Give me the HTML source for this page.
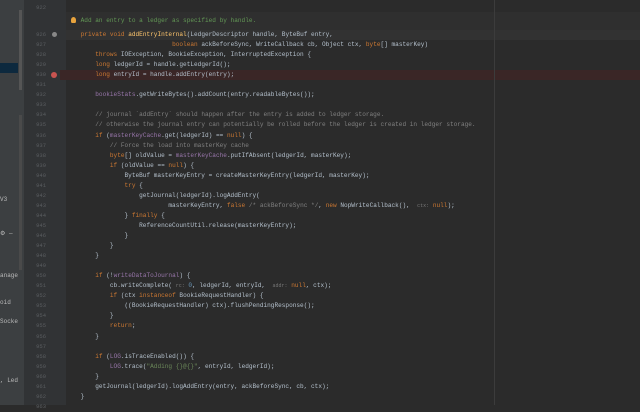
<!DOCTYPE html>
<html><head><style>
body{margin:0;width:640px;height:405px;overflow:hidden;background:#2b2b2b;font-family:"Liberation Mono",monospace;}
#left{position:absolute;left:0;top:0;width:24px;height:405px;background:#3c3f41;}
#gut{position:absolute;left:24px;top:0;width:42px;height:405px;background:#313335;}
.ln{position:absolute;left:24px;width:22px;text-align:right;font-size:5.5px;line-height:10px;color:#5a5d60;}
.c{position:absolute;left:66px;font-size:6.1px;line-height:10px;color:#b4c0cc;white-space:pre;}
.k{color:#cc7832}.cm{color:#808080}.d{color:#629755}.f{color:#9876aa}.s{color:#6a8759}.n{color:#6897bb}.h{color:#787878;font-size:5px}.m{color:#ffc66d}
.lt{position:absolute;left:0;font-size:6px;color:#bbbbbb;white-space:pre;}
</style></head><body>
<div id="left"></div>
<div style="position:absolute;left:0;top:63px;width:18px;height:10px;background:#0d293e"></div>
<div style="position:absolute;left:19px;top:10px;width:3px;height:80px;background:#555;"></div>
<div style="position:absolute;left:19px;top:115px;width:3px;height:155px;background:#4a4a4a;"></div>
<div class="lt" style="top:196px">V3</div>
<div class="lt" style="top:230px">⚙ —</div>
<div class="lt" style="top:272px">anage</div>
<div class="lt" style="top:299px">oid</div>
<div class="lt" style="top:318px">Socke</div>
<div class="lt" style="top:377px">, Led</div>
<div id="gut"></div>
<div style="position:absolute;left:66px;top:12px;width:574px;height:19px;background:#2f2f2f"></div>
<div style="position:absolute;left:66px;top:30px;width:574px;height:10px;background:#323232"></div>
<div style="position:absolute;left:60px;top:70px;width:580px;height:10px;background:#3a2626"></div>
<div style="position:absolute;left:494px;top:0;width:1px;height:405px;background:#3c3c3c"></div>
<div style="position:absolute;left:51px;top:72px;width:6px;height:6px;border-radius:50%;background:#c75450"></div>
<div style="position:absolute;left:52px;top:32px;width:5px;height:5px;border-radius:50%;background:#888"></div>
<div style="position:absolute;left:71px;top:17px;width:5px;height:6px;border-radius:50% 50% 30% 30%;background:#e8a33d"></div>
<div id="code"></div>
<script>
var L=[
[922,''],
[null,'    <span class="d">Add an entry to a ledger as specified by handle.</span>',21],
[926,'    <span class="k">private void </span><span class="m">addEntryInternal</span>(LedgerDescriptor handle, ByteBuf entry,'],
[927,'                             <span class="k">boolean</span> ackBeforeSync, WriteCallback cb, Object ctx, <span class="k">byte</span>[] masterKey)'],
[928,'        <span class="k">throws</span> IOException, BookieException, InterruptedException {'],
[929,'        <span class="k">long</span> ledgerId = handle.getLedgerId();'],
[930,'        <span class="k">long</span> entryId = handle.addEntry(entry);'],
[931,''],
[932,'        <span class="f">bookieStats</span>.getWriteBytes().addCount(entry.readableBytes());'],
[933,''],
[934,'        <span class="cm">// journal `addEntry` should happen after the entry is added to ledger storage.</span>'],
[935,'        <span class="cm">// otherwise the journal entry can potentially be rolled before the ledger is created in ledger storage.</span>'],
[936,'        <span class="k">if</span> (<span class="f">masterKeyCache</span>.get(ledgerId) == <span class="k">null</span>) {'],
[937,'            <span class="cm">// Force the load into masterKey cache</span>'],
[938,'            <span class="k">byte</span>[] oldValue = <span class="f">masterKeyCache</span>.putIfAbsent(ledgerId, masterKey);'],
[939,'            <span class="k">if</span> (oldValue == <span class="k">null</span>) {'],
[940,'                ByteBuf masterKeyEntry = createMasterKeyEntry(ledgerId, masterKey);'],
[941,'                <span class="k">try</span> {'],
[942,'                    getJournal(ledgerId).logAddEntry('],
[943,'                            masterKeyEntry, <span class="k">false</span> <span class="cm">/* ackBeforeSync */</span>, <span class="k">new</span> NopWriteCallback(),  <span class="h">ctx:</span> <span class="k">null</span>);'],
[944,'                } <span class="k">finally</span> {'],
[945,'                    ReferenceCountUtil.release(masterKeyEntry);'],
[946,'                }'],
[947,'            }'],
[948,'        }'],
[949,''],
[950,'        <span class="k">if</span> (!<span class="f">writeDataToJournal</span>) {'],
[951,'            cb.writeComplete( <span class="h">rc:</span> <span class="n">0</span>, ledgerId, entryId,  <span class="h">addr:</span> <span class="k">null</span>, ctx);'],
[952,'            <span class="k">if</span> (ctx <span class="k">instanceof</span> BookieRequestHandler) {'],
[953,'                ((BookieRequestHandler) ctx).flushPendingResponse();'],
[954,'            }'],
[955,'            <span class="k">return</span>;'],
[956,'        }'],
[957,''],
[958,'        <span class="k">if</span> (<span class="f">LOG</span>.isTraceEnabled()) {'],
[959,'            <span class="f">LOG</span>.trace(<span class="s">"Adding {}@{}"</span>, entryId, ledgerId);'],
[960,'        }'],
[961,'        getJournal(ledgerId).logAddEntry(entry, ackBeforeSync, cb, ctx);'],
[962,'    }'],
[963,'']];
var h='';
L.forEach(function(r){var y=r[2]!==undefined?r[2]:(r[0]==922?8:35+(r[0]-926)*10.05);var t=(y-5).toFixed(2);
if(r[0])h+='<div class="ln" style="top:'+t+'px">'+r[0]+'</div>';
h+='<div class="c" style="top:'+t+'px">'+r[1]+'</div>';});
document.getElementById('code').innerHTML=h;
</script>
</body></html>
